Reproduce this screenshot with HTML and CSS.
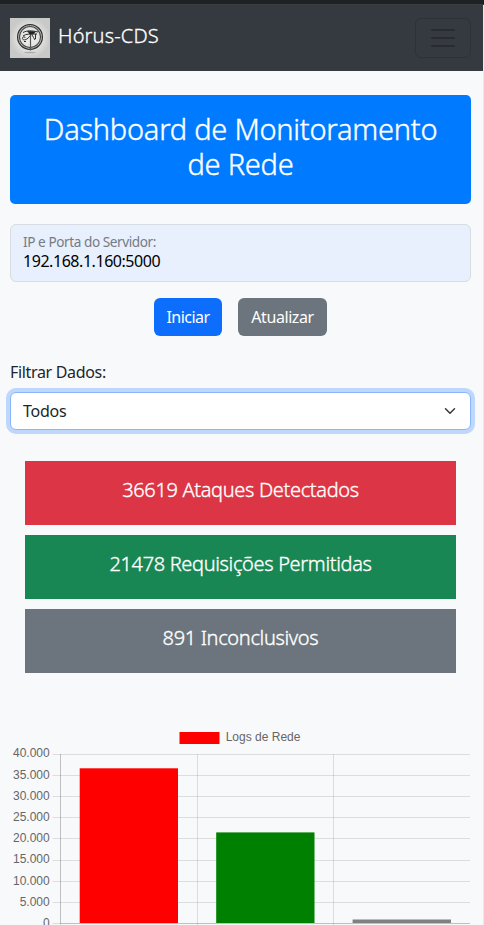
FILE: index.html
```html
<!DOCTYPE html>
<html lang="pt-BR">
<head>
<meta charset="utf-8">
<title>Hórus-CDS</title>
<link rel="stylesheet" href="styles.css">
</head>
<body>
<div class="top-strip"></div>
<div class="page">
<nav class="navbar">
  <a class="brand">
    <svg class="logo" viewBox="0 0 40 40" aria-hidden="true">
      <defs><radialGradient id="paper"><stop offset="0" stop-color="#eeeeed"/><stop offset=".65" stop-color="#dededd"/><stop offset="1" stop-color="#c9c9c8"/></radialGradient></defs>
      <rect width="40" height="40" fill="url(#paper)"/>
      <ellipse cx="20" cy="34.5" rx="6" ry=".7" fill="#aaa"/>
      <g fill="none" stroke="#2d2d2d">
        <circle cx="20" cy="19" r="12.4" stroke-width="1.2"/>
        <circle cx="20" cy="19" r="10.5" stroke="#484848" stroke-width="1.1"/>
        <circle cx="20" cy="19" r="11.5" stroke="#777" stroke-width="1" stroke-dasharray="1 1.2"/>
        <path d="M20.500 15v17.500" stroke="#555" stroke-width="1.2"/>
        <path d="M13 14.500c4-2.200 9-2 15-.5M13 18c3-2.500 8-2 14-2M20 18c-3 4-7 5-7.500 2.500-.3-2 2.500-2.300 2.700-.5M22 17c1 2 2 3 3 5" stroke-width="1"/>
        <path d="M25.500 16v5M14 23.500h2" stroke-width="1"/>
      </g>
      <path d="M17 13l9 .5-3 3h-3z" fill="#222"/>
    </svg>
    <span class="brand-name">Hórus-CDS</span>
  </a>
  <button class="toggler" aria-label="Menu">
    <svg viewBox="0 0 30 30" width="30" height="30"><path d="M4 7h22M4 15h22M4 23h22" stroke="#282c30" stroke-width="2" stroke-linecap="round"/></svg>
  </button>
</nav>
<main class="container">
  <header class="banner"><h1>Dashboard de Monitoramento de Rede</h1></header>
  <div class="field">
    <label><span class="field-label">IP e Porta do Servidor:</span></label>
    <div><span class="field-value">192.168.1.160:5000</span></div>
  </div>
  <div class="actions">
    <button class="btn primary"><span class="t-start">Iniciar</span></button>
    <button class="btn secondary"><span class="t-update">Atualizar</span></button>
  </div>
  <div class="filter-label"><span class="t-filter">Filtrar Dados:</span></div>
  <div class="select">
    <span class="t-all">Todos</span>
    <svg viewBox="0 0 16 16" width="16" height="12"><path d="m2 5 6 6 6-6" fill="none" stroke="#343a40" stroke-width="2" stroke-linecap="round" stroke-linejoin="round"/></svg>
  </div>
  <section class="stats">
    <div class="stat danger"><span class="t-attacks">36619 Ataques Detectados</span></div>
    <div class="stat success"><span class="t-allowed">21478 Requisições Permitidas</span></div>
    <div class="stat muted"><span class="t-unknown">891 Inconclusivos</span></div>
  </section>
  <svg class="chart" viewBox="10 723 461 202" width="461" height="202">
    <rect x="179.500" y="732" width="40" height="12" fill="#f00"/>
    <g class="chart-text">
      <text x="225.700" y="741">Logs de Rede</text>
      <g text-anchor="end">
        <text x="49.700" y="757">40.000</text>
        <text x="49.700" y="779">35.000</text>
        <text x="49.700" y="800">30.000</text>
        <text x="49.700" y="821">25.000</text>
        <text x="49.700" y="842">20.000</text>
        <text x="49.700" y="863">15.000</text>
        <text x="49.700" y="885">10.000</text>
        <text x="49.700" y="906">5.000</text>
        <text x="49.700" y="927">0</text>
      </g>
    </g>
    <path d="M52.500 754.500H470M52.500 775.500H470M52.500 796.500H470M52.500 817.500H470M52.500 838.500H470M52.500 860.500H470M52.500 881.500H470M52.500 902.500H470M52.500 923.500H470M60.500 754V925M197.500 754V925M333.500 754V925" stroke="#000" stroke-opacity=".11" fill="none"/>
    <path d="M60.500 754V923M60 923.500H470" stroke="#000" stroke-opacity=".13" fill="none"/>
    <rect x="79.700" y="768.300" width="98.300" height="154.700" fill="#f00"/>
    <rect x="216.200" y="832.400" width="98.300" height="90.600" fill="green"/>
    <rect x="352.600" y="919.500" width="98.400" height="3.500" fill="gray"/>
  </svg>
</main>
</div>
</body>
</html>
```
FILE: styles.css
```css
* { box-sizing: border-box; }
html, body { margin: 0; height: 925px; overflow: hidden; }
body { background: #f8f9fb; color: #212529; font: 16px/24px "Noto Sans", sans-serif; }
.top-strip { height: 5px; background: #202124; border-bottom: 1px solid #3c3d3f; }
.page { width: 484px; height: 920px; border-right: 1px solid #e9eaec; }
.navbar { height: 66px; padding: 0 12px 0 10px; display: flex; align-items: center; justify-content: space-between; background: #343a40; }
.brand { display: flex; align-items: center; gap: 8px; color: #fff; font-size: 20px; }
.logo { width: 40px; height: 40px; }
.brand-name { padding-bottom: 4px; letter-spacing: .15px; font-weight: 300; -webkit-text-stroke: .3px currentColor; }
.toggler { width: 56px; height: 40px; padding: 0; border: 1px solid #2d3236; border-radius: 6px; background: none; display: grid; place-items: center; }
.container { padding: 24px 12px 0 10px; }
.banner { height: 109px; padding: 16px 30px 0; border-radius: 5px; background: #007bff; color: #fff; text-align: center; }
h1 { margin: 0; font-size: 29px; line-height: 35px; font-weight: 300; letter-spacing: -.24px; -webkit-text-stroke: .4px currentColor; }
.field { height: 58px; margin-top: 20px; padding: 8px 12px; border: 1px solid #d8dde3; border-radius: 6px; background: #e8effd; }
.field label { display: block; height: 18px; line-height: 18px; font-size: 13.6px; color: #747b84; letter-spacing: -.43px; }
.field div { line-height: 20px; color: #000; letter-spacing: -.45px; }
.actions { display: flex; justify-content: center; gap: 16px; margin-top: 16px; }
.btn { height: 38px; padding: 0; border: 0; border-radius: 6px; font: inherit; color: #fff; text-align: center; white-space: nowrap; }
.primary { width: 68px; background: #0d6efd; letter-spacing: -.55px; }
.secondary { width: 89px; background: #6c757d; letter-spacing: -.42px; }
.filter-label { margin-top: 24px; letter-spacing: -.33px; }
.select { height: 38px; margin-top: 8px; padding: 0 12px; border: 1px solid #86b7fe; border-radius: 6px; background: #fff; box-shadow: 0 0 0 4px #bed7fb; display: flex; align-items: center; justify-content: space-between; letter-spacing: -.25px; }
.stats { display: grid; gap: 10px; padding: 31px 15px 0; }
.stat { height: 64px; padding-top: 17px; text-align: center; color: #fff; font-size: 20px; line-height: 24px; font-weight: 300; letter-spacing: -.34px; -webkit-text-stroke: .35px currentColor; white-space: nowrap; }
.danger { background: #dc3545; }
.success { background: #198754; }
.muted { background: #6c757d; }
.chart { display: block; margin-top: 50px; }
.chart-text { font: 12px "Liberation Sans", sans-serif; fill: #666; }
```
